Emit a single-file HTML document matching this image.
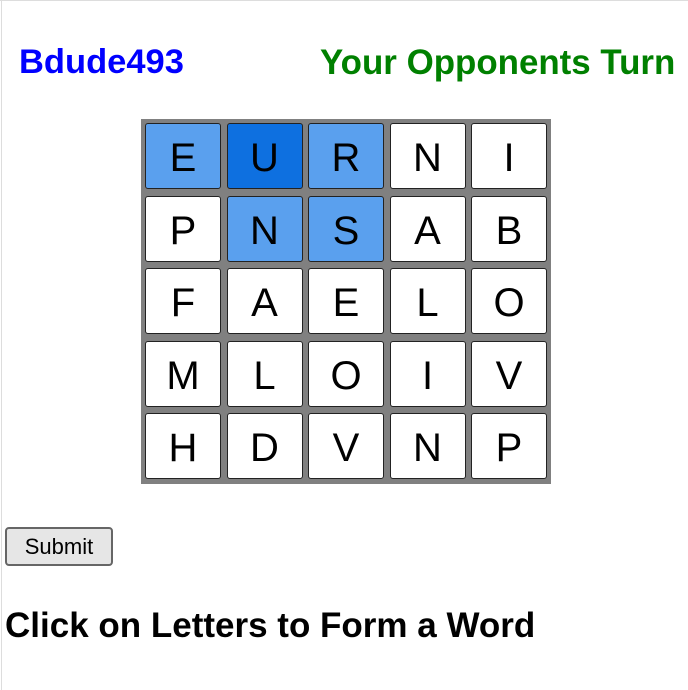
<!DOCTYPE html>
<html><head><style>
body{margin:0;width:688px;height:690px;position:relative;background:#fff;font-family:"Liberation Sans",sans-serif;overflow:hidden}
.bl{position:absolute;left:1px;top:0;width:1px;height:690px;background:#ddd}
.bt{position:absolute;left:0;top:0;width:688px;height:1px;background:#ddd}
.h{position:absolute;font-weight:bold;top:43px;white-space:nowrap}
#grid{position:absolute;left:141px;top:119px;width:410px;height:365px;background:#808080}
.c{position:absolute;width:74px;height:64px;border:1px solid #222;border-radius:3px;background:#fff;font-size:40px;text-align:center;line-height:68px;color:#000}
.l{background:#5aa0ee}.d{background:#0e70e0}
button{position:absolute;left:5px;top:527px;width:108px;height:39px;font-family:"Liberation Sans",sans-serif;font-size:22px;background:#e6e6e6;border:2px solid #666;border-radius:4px;padding:0}
.f{position:absolute;left:5px;top:606px;font-weight:bold;font-size:35px;white-space:nowrap}
</style></head><body>
<div class="bl"></div><div class="bt"></div>
<div class="h" style="left:19px;color:#0000ff;font-size:34.5px">Bdude493</div>
<div class="h" style="left:320px;color:#008000;font-size:34.9px">Your Opponents Turn</div>
<div id="grid"></div>
<div id="cells"></div>
<script>
var L=["EURNI","PNSAB","FAELO","MLOIV","HDVNP"];
var cls={"0,0":"l","0,1":"d","0,2":"l","1,1":"l","1,2":"l"};
var h="";
for(var r=0;r<5;r++)for(var c=0;c<5;c++){
var x=145+c*81.5,y=123+r*72.5;
h+='<div class="c '+(cls[r+","+c]||"")+'" style="left:'+x+'px;top:'+y+'px">'+L[r][c]+'</div>';}
document.getElementById("cells").innerHTML=h;
</script>
<button>Submit</button>
<div class="f">Click on Letters to Form a Word</div>
</body></html>
